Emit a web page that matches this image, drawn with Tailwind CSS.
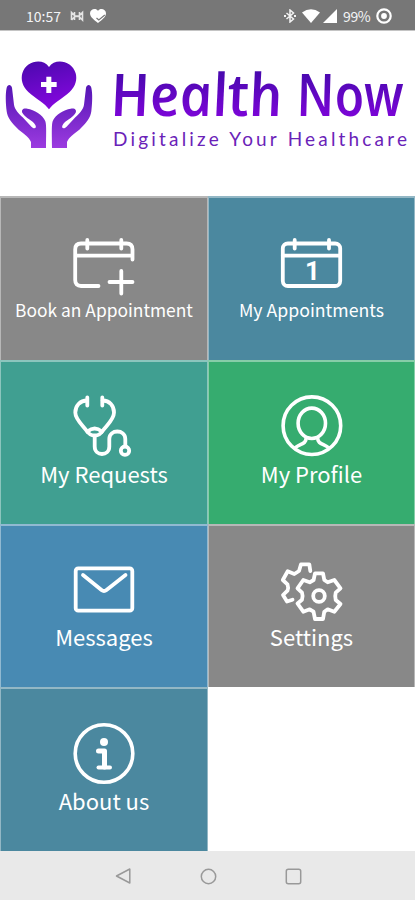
<!DOCTYPE html>
<html lang="en">
<head>
  <meta charset="UTF-8" />
  <meta name="viewport" content="width=device-width,initial-scale=1.0" />
  <title>Health Now</title>
  <script src="https://cdn.jsdelivr.net/npm/@tailwindcss/browser@4"></script>
</head>
<body class="w-[415px] h-[900px] overflow-hidden flex flex-col bg-white font-['Noto_Sans_CJK_SC','Noto_Sans',sans-serif] text-white">

  <!-- STATUS BAR -->
  <div class="h-[30px] shrink-0 flex items-center justify-between bg-[#777777] pl-[26px] pr-[23px] pt-0.5">
    <div class="flex items-center">
      <span class="w-[36px] text-[14px] leading-none text-gray-100">10:57</span>
      <svg class="ml-2 w-[14px] h-[12px]" viewBox="0 0 14 12" fill="none" stroke="#e5e5e5" stroke-width="1.6">
        <path d="M1.500 10V2.500L5 6L9 6L12.500 2.500V10L9 6.500H5L1.500 10M4.500 2v8M9.500 2v8" />
      </svg>
      <svg class="ml-1.5 w-[16px] h-[14px]" viewBox="0 0 16 14">
        <path d="M8 14C4 11 0 8 0 4.300C0 0 6-1.500 8 2C10-1.500 16 0 16 4.300C16 8 12 11 8 14Z" fill="#fff" />
        <path d="M6.500 9l2.300 2l6-5" fill="none" stroke="#777" stroke-width="1.200" />
      </svg>
    </div>
    <div class="flex items-center">
      <svg class="w-[12px] h-[14px]" viewBox="0 0 12 14" fill="none" stroke="#f3f3f3" stroke-width="1.500">
        <path d="M2.500 4l7 6L6 13V1l3.500 3l-7 6" />
        <path d="M0 7h2M10 7h2" stroke-width="1.800" />
      </svg>
      <svg class="ml-[6px] w-[18px] h-[14px]" viewBox="0 0 18 14" fill="#fff"><path d="M0 3.500Q9-2.800 18 3.500L9 14Z" /></svg>
      <svg class="ml-[3px] w-[14px] h-[14px]" viewBox="0 0 14 14" fill="#fff"><path d="M14 0V14H0Z" /></svg>
      <span class="ml-[6px] w-[29px] text-[14px] leading-none text-gray-100 tracking-tight">99%</span>
      <svg class="ml-1 w-[16px] h-[16px]" viewBox="0 0 16 16">
        <circle cx="8" cy="8" r="6.700" fill="none" stroke="#fff" stroke-width="2.200" />
        <circle cx="8" cy="8" r="2.900" fill="#fff" />
      </svg>
    </div>
  </div>

  <!-- LOGO -->
  <header class="h-[166px] shrink-0 flex border-t border-[#c4c4c4] pt-[19px]">
    <svg class="w-[105px] h-[110px] shrink-0" viewBox="0 0 315 330">
      <defs>
        <linearGradient id="heart" x1="0" y1="0" x2="0.300" y2="1">
          <stop offset="0" stop-color="#4a08ad" />
          <stop offset="1" stop-color="#8208dc" />
        </linearGradient>
        <linearGradient id="hands" x1="0" y1="0" x2="0" y2="1">
          <stop offset="0" stop-color="#5414b4" />
          <stop offset="1" stop-color="#9c3be0" />
        </linearGradient>
      </defs>
      <path fill="url(#heart)" d="M147 178C135 160 108 147 85 126C67 110 62 88 67 70C77 33 128 22 147 51C166 22 217 33 227 70C232 88 227 110 209 126C186 147 159 160 147 178Z" />
      <path fill="#fff" d="M139 80h15v16h16v15h-16v18h-15v-18h-16v-15h16z" />
      <g fill="url(#hands)">
        <path d="M93 294V276C88 262 72 252 56 239C36 220 22 203 20 184C17 158 16 131 20 113C23 102 33 102 36 113L42 164C44 178 56 191 68 202L95 231C103 239 111 234 106 225C98 211 77 205 68 190C62 180 70 173 82 176C102 179 129 194 136 214C140 224 138 260 138 294Z" />
        <path d="M201 294V276C206 262 222 252 238 239C258 220 272 203 274 184C277 158 278 131 274 113C271 102 261 102 258 113L252 164C250 178 238 191 226 202L199 231C191 239 183 234 188 225C196 211 217 205 226 190C232 180 224 173 212 176C192 179 165 194 158 214C154 224 156 260 156 294Z" />
      </g>
    </svg>
    <svg class="w-[310px] h-[110px] overflow-visible" viewBox="0 0 310 110">
      <defs>
        <linearGradient id="title" gradientUnits="userSpaceOnUse" x1="0" y1="-50" x2="0" y2="0">
          <stop offset="0" stop-color="#4109a8" />
          <stop offset="1" stop-color="#7a05d6" />
        </linearGradient>
      </defs>
      <!-- skewed back so the italic stands almost upright -->
      <g transform="translate(8 65.500) skewX(9)" fill="url(#title)" class="font-['Open_Sans'] font-semibold italic text-[59px]">
        <text x="0" y="0" textLength="172" lengthAdjust="spacingAndGlyphs">Health</text>
        <text x="186" y="0" textLength="107" lengthAdjust="spacingAndGlyphs">Now</text>
      </g>
      <text x="8" y="95.500" textLength="294" fill="#6a22b8" class="font-['Lato'] text-[19px]">Digitalize Your Healthcare</text>
    </svg>
  </header>

  <!-- MENU -->
  <main class="grid grid-cols-[208px_207px] auto-rows-[163.75px] h-[655px] shrink-0 leading-none">
    <a class="flex flex-col items-center border-t-2 border-x border-white/40 bg-[#888888] pt-[31.5px]">
      <svg class="size-16 shrink-0 overflow-visible" viewBox="0 0 64 64" fill="none" stroke="#fff" stroke-width="3.800" stroke-linecap="round" stroke-linejoin="round">
        <path d="M26.500 56H9Q3.200 56 3.200 50V19.500Q3.200 13.500 9 13.500H54.500Q60.500 13.500 60.500 19.500V29.500M3.200 25.700H60.500" />
        <path d="M15.300 10V18.500M49.300 10V18.500M49.300 41V63.500M37.500 52H60.500" />
      </svg>
      <span class="mt-[7px] text-[17.400px] whitespace-nowrap">Book an Appointment</span>
    </a>
    <a class="flex flex-col items-center border-t-2 border-x border-white/40 bg-[#4b889f] pt-[31.5px]">
      <svg class="size-16 shrink-0" viewBox="0 0 64 64" fill="none" stroke="#fff" stroke-width="3.800" stroke-linecap="round">
        <rect x="2.800" y="13.500" width="57.400" height="42.500" rx="5" />
        <path d="M2.800 25.700H60.200M14.700 10V18.500M49 10V18.500" />
        <text x="25" y="49.500" fill="#fff" stroke="none" class="font-['Roboto'] font-bold text-[26px]">1</text>
      </svg>
      <span class="mt-[7px] text-[17.700px] whitespace-nowrap">My Appointments</span>
    </a>
    <a class="flex flex-col items-center border-t-2 border-x border-white/40 bg-[#409f91] pt-[32.5px]">
      <svg class="size-16 shrink-0" viewBox="0 0 64 64" fill="none" stroke="#fff" stroke-width="3.800" stroke-linecap="round" stroke-linejoin="round">
        <path d="M15.300 3.500V11.500M30.300 3.500V11.500" />
        <path d="M15 6.500C8 6.500 3.300 12 3.300 18.500C3.300 26 11.500 31.500 15.500 38M30.600 6.500C37.600 6.500 42 12 42 18.500C42 26 34 31.500 29.800 38" />
        <path d="M15.500 37.500Q22.700 31.500 29.800 37.500Q28 41.500 22.700 41.500Q17.500 41.500 15.500 37.500Z" />
        <path d="M22.700 42V52.500C22.700 62.500 37.300 62.500 37.300 52.500V45C37.300 35 53.300 35 53.300 45V51.500" />
        <circle cx="53" cy="56.700" r="4.200" />
      </svg>
      <span class="mt-[3.500px] text-[22px] whitespace-nowrap">My Requests</span>
    </a>
    <a class="flex flex-col items-center border-t-2 border-x border-white/40 bg-[#36ac6f] pt-[32.5px]">
      <svg class="size-16 shrink-0" viewBox="0 0 64 64" fill="none" stroke="#fff" stroke-width="3.600" stroke-linecap="round">
        <circle cx="31.900" cy="31.700" r="28.800" />
        <ellipse cx="31.800" cy="29.300" rx="13.700" ry="15.200" />
        <path d="M26 44.500C26.500 50 19 50 15 54M37.800 44.500C37.300 50 44.800 50 48.800 54" />
      </svg>
      <span class="mt-[3.500px] text-[22px] whitespace-nowrap">My Profile</span>
    </a>
    <a class="flex flex-col items-center border-t-2 border-x border-white/40 bg-[#488ab3] pt-[32.5px]">
      <svg class="size-16 shrink-0" viewBox="0 0 64 64" fill="none" stroke="#fff" stroke-width="3.800" stroke-linecap="round" stroke-linejoin="round">
        <rect x="3.700" y="10.400" width="56.600" height="42.300" rx="2.500" />
        <path d="M11 17L29.500 32Q32 34 34.500 32L53.500 17" />
      </svg>
      <span class="mt-[3px] text-[22px] whitespace-nowrap">Messages</span>
    </a>
    <a class="flex flex-col items-center border-t-2 border-x border-white/40 bg-[#888888] pt-[32.5px]">
      <svg class="size-16 shrink-0" viewBox="0 0 64 64" fill="none" stroke="#fff" stroke-width="3.800" stroke-linecap="round" stroke-linejoin="round">
        <path d="M35 15.300H43L44.300 22L47.700 24.300L54.300 22L60.500 30.300L55.700 34.700Q54.700 38 55.700 42L60.500 46L54.300 53.700L47.700 51.300L44.300 53.700L43 61H35L33.500 53.700L29.700 51.300L23.300 53.700L17.500 45.500L22 41.800Q23.200 38 22 34.700L17.500 30.300L23.300 22L29.700 24.300L33.600 22Z" />
        <circle cx="39" cy="38" r="5.800" />
        <path d="M30.300 13L29.300 6.300H21L19 13L14.300 16L7.700 13.300L2.800 22L7.500 26.300Q8.700 29.500 7.500 32.700L3 37L7 43.500L12.500 41.700" />
      </svg>
      <span class="mt-[3px] text-[22px] whitespace-nowrap">Settings</span>
    </a>
    <a class="flex flex-col items-center border-t-2 border-x border-white/40 bg-[#4b889f] pt-[32.5px]">
      <svg class="size-16 shrink-0" viewBox="0 0 64 64" fill="none" stroke="#fff" stroke-width="3.600">
        <circle cx="32" cy="31.500" r="28.800" />
        <circle cx="32" cy="20" r="4" fill="#fff" stroke="none" />
        <path d="M26.500 29H32.500V45" stroke-width="5" stroke-linejoin="round" stroke-linecap="round" />
        <path d="M26.500 45.500H38" stroke-width="4" stroke-linecap="round" />
      </svg>
      <span class="mt-[3.500px] text-[22px] whitespace-nowrap">About us</span>
    </a>
  </main>

  <!-- NAVIGATION BAR -->
  <nav class="h-[49px] shrink-0 flex items-center justify-between bg-[#e9e9e9] pl-[115px] pr-[113px] pt-px">
    <svg class="size-4" viewBox="0 0 16 16" fill="none" stroke="#999" stroke-width="1.500" stroke-linejoin="round"><path d="M14.800 1V15L1.500 8Z" /></svg>
    <svg class="size-[17px]" viewBox="0 0 17 17" fill="none" stroke="#999" stroke-width="1.500"><circle cx="8.500" cy="8.500" r="7.200" /></svg>
    <svg class="size-[17px]" viewBox="0 0 17 17" fill="none" stroke="#999" stroke-width="1.500"><rect x="1.300" y="1.300" width="14.400" height="14.400" rx="2" /></svg>
  </nav>
</body>
</html>
